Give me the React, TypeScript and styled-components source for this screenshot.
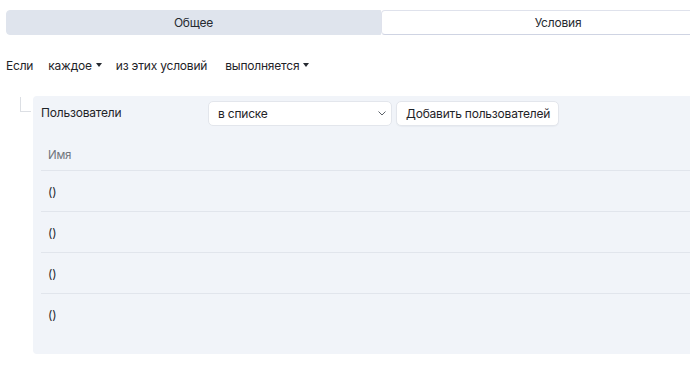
import React from "react";
import styled, { createGlobalStyle } from "styled-components";

const Global = createGlobalStyle`
  html, body { margin: 0; padding: 0; background: #ffffff; overflow: hidden; }
  body { font-family: Inter, "Noto Sans", "Liberation Sans", sans-serif; font-size: 12px; letter-spacing: -0.2px; color: #1f2328; }
  * { box-sizing: border-box; }
`;

const Page = styled.div`
  width: 740px;
  padding: 10px 0 0 6px;
`;

const Tabs = styled.div`
  display: grid;
  grid-template-columns: 375px 354px;
  height: 25px;
`;

const Tab = styled.div<{ $active?: boolean }>`
  display: flex;
  align-items: center;
  justify-content: center;
  font-size: 12px;
  color: #262a30;
  background: ${(p) => (p.$active ? "#ffffff" : "#dfe4ed")};
  border-radius: ${(p) => (p.$active ? "4px" : "4px 0 0 4px")};
  border: 1px solid ${(p) => (p.$active ? "#dfe2ec" : "#dfe4ed")};
  border-bottom-color: ${(p) => (p.$active ? "#cfd4e3" : "#dfe4ed")};
`;

const Sentence = styled.div`
  display: flex;
  align-items: center;
  height: 22px;
  margin-top: 19px;
  color: #1f2328;
`;

const Word = styled.span<{ $gap?: number }>`
  margin-right: ${(p) => p.$gap ?? 0}px;
  display: inline-flex;
  align-items: center;
  white-space: nowrap;
`;

const Caret = styled.span`
  width: 0;
  height: 0;
  margin-left: 4px;
  border-left: 3.5px solid transparent;
  border-right: 3.5px solid transparent;
  border-top: 4px solid #262a30;
`;

const TreeRow = styled.div`
  display: flex;
  margin-top: 20px;
`;

const Branch = styled.div`
  width: 11px;
  height: 15px;
  margin: 1px 2px 0 14px;
  border-left: 1px solid #dcdfe4;
  border-bottom: 1px solid #dcdfe4;
`;

const Panel = styled.div`
  flex: 1;
  background: #f1f4f9;
  border-radius: 4px;
  padding: 5px 8px 20px 8px;
  height: 258px;
`;

const Header = styled.div`
  display: flex;
  align-items: center;
  height: 25px;
`;

const FieldLabel = styled.div`
  width: 167px;
  margin-top: -3px;
`;

const Select = styled.div`
  width: 184px;
  height: 25px;
  display: flex;
  align-items: center;
  justify-content: space-between;
  padding: 0 5px 0 9px;
  background: #ffffff;
  border: 1px solid #e3e6ec;
  border-radius: 5px;
`;

const Button = styled.div`
  margin-left: 4px;
  height: 25px;
  display: flex;
  align-items: center;
  padding: 0 8px 0 9px;
  background: #ffffff;
  border: 1px solid #e3e6ec;
  border-radius: 5px;
  box-shadow: 0 1px 1px rgba(30, 40, 70, 0.04);
  white-space: nowrap;
`;

const Table = styled.div`
  margin-top: 4px;
`;

const HeadCell = styled.div`
  height: 41px;
  display: flex;
  align-items: center;
  padding: 10px 0 0 7px;
  font-size: 11.5px;
  color: #70757d;
  border-bottom: 1px solid #e1e5ec;
`;

const Row = styled.div<{ $last?: boolean }>`
  height: 41px;
  display: flex;
  align-items: center;
  padding-left: 7px;
  color: #262a30;
  border-bottom: 1px solid ${(p) => (p.$last ? "transparent" : "#e1e5ec")};
`;

const Chevron = () => (
  <svg width="8" height="5" viewBox="0 0 8 5" fill="none">
    <path d="M0.8 0.8l3.2 3.2 3.2-3.2" stroke="#5b6169" strokeWidth="1" strokeLinecap="round" strokeLinejoin="round" />
  </svg>
);

export default function App() {
  const rows = ["()", "()", "()", "()"];
  return (
    <>
      <Global />
      <Page>
        <Tabs>
          <Tab>Общее</Tab>
          <Tab $active>Условия</Tab>
        </Tabs>
        <Sentence>
          <Word $gap={15}>Если</Word>
          <Word $gap={14}>
            каждое<Caret />
          </Word>
          <Word $gap={18}>из этих условий</Word>
          <Word>
            выполняется<Caret />
          </Word>
        </Sentence>
        <TreeRow>
          <Branch />
          <Panel>
            <Header>
              <FieldLabel>Пользователи</FieldLabel>
              <Select>
                <span>в списке</span>
                <Chevron />
              </Select>
              <Button>Добавить пользователей</Button>
            </Header>
            <Table>
              <HeadCell>Имя</HeadCell>
              {rows.map((r, i) => (
                <Row key={i} $last={i === rows.length - 1}>
                  {r}
                </Row>
              ))}
            </Table>
          </Panel>
        </TreeRow>
      </Page>
    </>
  );
}
